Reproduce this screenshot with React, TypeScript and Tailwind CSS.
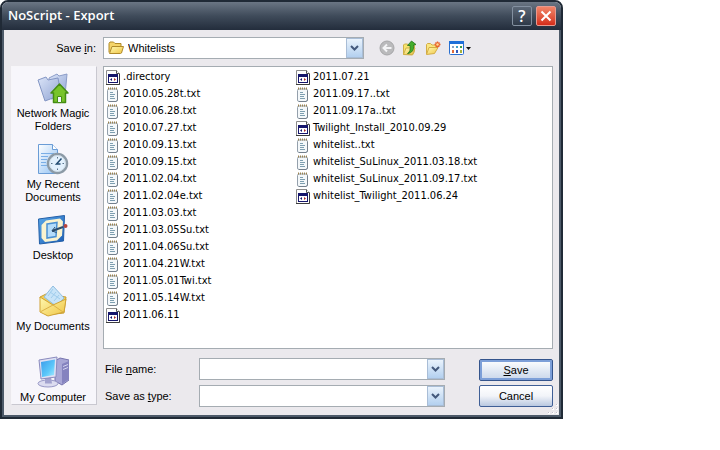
import type { ReactNode } from "react";

type FileEntry = { name: string; kind: "text" | "app" };

const files: FileEntry[] = [
  { name: ".directory", kind: "app" },
  { name: "2010.05.28t.txt", kind: "text" },
  { name: "2010.06.28.txt", kind: "text" },
  { name: "2010.07.27.txt", kind: "text" },
  { name: "2010.09.13.txt", kind: "text" },
  { name: "2010.09.15.txt", kind: "text" },
  { name: "2011.02.04.txt", kind: "text" },
  { name: "2011.02.04e.txt", kind: "text" },
  { name: "2011.03.03.txt", kind: "text" },
  { name: "2011.03.05Su.txt", kind: "text" },
  { name: "2011.04.06Su.txt", kind: "text" },
  { name: "2011.04.21W.txt", kind: "text" },
  { name: "2011.05.01Twi.txt", kind: "text" },
  { name: "2011.05.14W.txt", kind: "text" },
  { name: "2011.06.11", kind: "app" },
  { name: "2011.07.21", kind: "app" },
  { name: "2011.09.17..txt", kind: "text" },
  { name: "2011.09.17a..txt", kind: "text" },
  { name: "Twilight_Install_2010.09.29", kind: "app" },
  { name: "whitelist..txt", kind: "text" },
  { name: "whitelist_SuLinux_2011.03.18.txt", kind: "text" },
  { name: "whitelist_SuLinux_2011.09.17.txt", kind: "text" },
  { name: "whitelist_Twilight_2011.06.24", kind: "app" },
];

function Gradients() {
  return (
    <svg className="absolute h-0 w-0" aria-hidden="true">
      <defs>
        <linearGradient id="yellow" x1="0" y1="0" x2="1" y2="1">
          <stop offset="0" stopColor="#fff8b0" />
          <stop offset="1" stopColor="#efc544" />
        </linearGradient>
        <linearGradient id="periwinkle" x1="0" y1="0" x2="1" y2="1">
          <stop offset="0" stopColor="#dbe4f8" />
          <stop offset="1" stopColor="#8fa3d2" />
        </linearGradient>
        <linearGradient id="screen" x1="0" y1="0" x2="1" y2="1">
          <stop offset="0" stopColor="#3b9bea" />
          <stop offset="0.6" stopColor="#5cc8fa" />
          <stop offset="1" stopColor="#a8ecff" />
        </linearGradient>
        <linearGradient id="blue" x1="0" y1="0" x2="1" y2="1">
          <stop offset="0" stopColor="#5aa9ea" />
          <stop offset="1" stopColor="#1a5cb4" />
        </linearGradient>
        <linearGradient id="page" x1="0" y1="0" x2="1" y2="1">
          <stop offset="0" stopColor="#ffffff" />
          <stop offset="1" stopColor="#8fc0f3" />
        </linearGradient>
      </defs>
    </svg>
  );
}

function TextFileIcon() {
  return (
    <svg viewBox="0 0 16 16" className="h-4 w-4 shrink-0" aria-hidden="true">
      <rect x="2.500" y="2" width="10" height="12.500" rx="1.500" fill="#f4f8fa" stroke="#94a0ac" />
      <path d="M12.500 3.500V13l-1.500 1.500H4" fill="none" stroke="#74808c" />
      <path d="M3 1.500h10" stroke="#9b8350" strokeWidth="2" strokeDasharray="1 1" />
      <path d="M5 5.500h3M5 7.500h5M5 9.500h4M5 11.500h5" stroke="#7e9fb0" />
    </svg>
  );
}

function AppFileIcon() {
  return (
    <svg viewBox="0 0 16 16" className="h-4 w-4 shrink-0" aria-hidden="true">
      <path d="M1.500 14.500V.5h10l3 3v11z" fill="#fff" stroke="#8c8c8c" />
      <path d="M14.500 4v10.500H1" fill="none" stroke="#3c3c3c" />
      <path d="M11.500.5v3h3" fill="#fff" stroke="#555" />
      <rect x="3.500" y="4.500" width="9" height="8" fill="#fff" stroke="#16166c" />
      <path d="M3 4h10v3H3z" fill="#16166c" />
      <path d="M7 8v3L5 9.500z" fill="#16166c" />
      <path d="M9 8v3l2-1.500z" fill="#a82828" />
    </svg>
  );
}

function FolderIcon() {
  return (
    <svg viewBox="0 0 16 16" className="h-4 w-4" aria-hidden="true">
      <path d="M1 12.500V3.500l1-1.500h3.500l1.500 1.500h6v3" fill="#f5d469" stroke="#b08a2a" />
      <path d="M1.500 13.500L4 6.500h11.500l-2 6.500-1 .5z" fill="url(#yellow)" stroke="#b08a2a" />
    </svg>
  );
}

function BackIcon() {
  return (
    <svg viewBox="0 0 16 16" className="h-4 w-4" aria-hidden="true">
      <circle cx="8" cy="8" r="7" fill="#bababc" stroke="#a6a6a8" />
      <path d="M12.500 8H5M8 4.500L4.500 8 8 11.500" fill="none" stroke="#f4f4f6" strokeWidth="2" />
    </svg>
  );
}

function UpFolderIcon() {
  return (
    <svg viewBox="0 0 16 16" className="h-4 w-4" aria-hidden="true">
      <path d="M1.500 14.500V5l1-1h3l1 1.500h6v6l-2 3.500z" fill="#f7e36f" stroke="#d0b04a" />
      <path d="M1.500 14.500L4 8h9l-2.500 6.500z" fill="url(#yellow)" stroke="#d0b04a" />
      <path d="M5.500 13.500C8 12 8.500 10 8 5.500H5.500L9.500 1l4.500 3.500-2.500.7c.8 4.500-1.500 8-6 8.300z" fill="#43ad2c" stroke="#23721a" strokeWidth="0.800" />
    </svg>
  );
}

function NewFolderIcon() {
  return (
    <svg viewBox="0 0 16 16" className="h-4 w-4" aria-hidden="true">
      <path d="M1.500 14V4.500l1-1h3L7 5h4.500v3" fill="#f9e680" stroke="#d3ac45" />
      <path d="M1.500 14.500L4 7.500h9l-3.500 6z" fill="url(#yellow)" stroke="#d3ac45" />
      <path d="M12.500 1.500v6M9.500 4.500h6M10.500 2.500l4 4M14.500 2.500l-4 4" stroke="#e9632c" strokeWidth="1.400" />
      <circle cx="12.500" cy="4.500" r="1.200" fill="#ffd890" />
    </svg>
  );
}

function ViewsIcon() {
  return (
    <svg viewBox="0 0 24 16" className="h-4 w-6" aria-hidden="true">
      <rect x="1.500" y="1.500" width="14" height="13" rx="1" fill="#fff" stroke="#2a6fd0" />
      <path d="M1 1h15v3H1z" fill="#1f6fd8" />
      <path d="M4 6h2v2H4z" fill="#8ba2c4" />
      <path d="M8 6h2v2H8z" fill="#41a0c8" />
      <path d="M12 6h2v2h-2z" fill="#3e9b45" />
      <path d="M4 10h2v3H4z" fill="#e06a3c" />
      <path d="M8 10h2v3H8z" fill="#3458b8" />
      <path d="M12 10h2v3h-2z" fill="#a8b13a" />
      <path d="M18 7h5l-2.500 3z" fill="#111" />
    </svg>
  );
}

function NetworkMagicIcon() {
  return (
    <svg viewBox="0 0 32 32" className="h-8 w-8" aria-hidden="true">
      <path d="M12 6l8-4 2 2 8-2-2 22-14 3z" fill="url(#periwinkle)" stroke="#8c9dc8" />
      <path d="M1 8l8-3 2 3 10-2 3 17-16 6z" fill="url(#periwinkle)" stroke="#8496c4" />
      <path d="M22.500 12L14 21h2.500v9.500h12V21H31z" fill="#78c42a" stroke="#458c14" strokeWidth="1.500" strokeLinejoin="round" />
      <path d="M20.500 30.500v-6h4v6z" fill="#f4f8ff" stroke="#458c14" />
    </svg>
  );
}

function RecentDocumentsIcon() {
  return (
    <svg viewBox="0 0 32 32" className="h-8 w-8" aria-hidden="true">
      <path d="M1.500 1.500h14l5 5v24h-19z" fill="url(#page)" stroke="#6a9cd6" />
      <path d="M15.500 1.500v5h5" fill="#fff" stroke="#6a9cd6" />
      <path d="M4 10.500h13M4 13.500h7M4 16.500h6M4 19.500h5M4 22.500h6" stroke="#79aee6" />
      <circle cx="20.500" cy="20.500" r="9.500" fill="#e3f1fd" stroke="#8c9aa6" strokeWidth="2.500" />
      <circle cx="20.500" cy="20.500" r="8" fill="none" stroke="#cddae4" />
      <path d="M20.500 14v1.500M20.500 25.500V27M14 20.500h1.500M25.500 20.500H27" stroke="#58728a" />
      <path d="M24.500 15.500l-5 5.500h4" fill="none" stroke="#234c72" strokeWidth="1.500" />
    </svg>
  );
}

function DesktopIcon() {
  return (
    <svg viewBox="0 0 32 32" className="h-8 w-8" aria-hidden="true">
      <path d="M1.500 5l26-3.500-1 25.500-24 3z" fill="url(#blue)" stroke="#2460a8" strokeLinejoin="round" />
      <path d="M9 6.500l14-2 3 3-1 14-5 5-12 1.500L4.500 24V11z" fill="#faf3cf" />
      <path d="M10 10l10-1.500-1 14-9 1.500z" fill="#b3dcfb" stroke="#4a90d2" strokeWidth="1.500" />
      <path d="M15 17l11-4" stroke="#2b4c6c" strokeWidth="2" />
      <path d="M18 13l-3 4 4.500 1.500" fill="none" stroke="#2b4c6c" />
      <circle cx="28.500" cy="12" r="2" fill="#b8443c" />
    </svg>
  );
}

function MyDocumentsIcon() {
  return (
    <svg viewBox="0 0 32 32" className="h-8 w-8" aria-hidden="true">
      <path d="M3 12l6-3 20 3-2 16-18 2z" fill="#f1cf59" stroke="#c99d30" />
      <path d="M16 1l11 12-8 8L7 12z" fill="#c8e4f8" stroke="#8fbde0" />
      <path d="M16 4l-5 7M19 7l-5 6M22 10l-5 6M13 7l10 7" stroke="#a0cdec" />
      <path d="M3 12l13 8 13-6-2 13-16 4-8-4z" fill="url(#yellow)" stroke="#d0a336" strokeLinejoin="round" />
      <path d="M4 26.500L16 20l10 7" fill="none" stroke="#dcb148" />
    </svg>
  );
}

function MyComputerIcon() {
  return (
    <svg viewBox="0 0 32 32" className="h-8 w-8" aria-hidden="true">
      <path d="M18 5l5-3 9 2v20l-7 5-7-4z" fill="#a9a7d6" stroke="#7674ae" />
      <path d="M25 8l7-3v18l-7 5z" fill="#8583bf" />
      <path d="M26 10.500l5-2M26 13.500l5-2" stroke="#d5d4f2" />
      <ellipse cx="11" cy="27.500" rx="10" ry="3.500" fill="#dcdcf0" stroke="#9898c6" />
      <path d="M8 21h6l1 6.500H8z" fill="#a2a2ce" />
      <path d="M2 4l18-3-1 20-15 2z" fill="#dfe0f4" stroke="#8a8bbe" strokeLinejoin="round" />
      <path d="M4 6l14-2.500-1 15.500-12 2z" fill="url(#screen)" />
    </svg>
  );
}

function ResizeGrip() {
  return (
    <svg viewBox="0 0 12 12" className="h-3 w-3" aria-hidden="true">
      <path d="M9 1h2v2H9zM5 5h2v2H5zM9 5h2v2H9zM1 9h2v2H1zM5 9h2v2H5zM9 9h2v2H9z" fill="#fff" />
      <path d="M9 1h1v1H9zM5 5h1v1H5zM9 5h1v1H9zM1 9h1v1H1zM5 9h1v1H5zM9 9h1v1H9z" fill="#c4c0cc" />
    </svg>
  );
}

function DropArrow() {
  return (
    <span className="flex h-full w-full items-center justify-center border border-[#a9bdd6] bg-linear-to-b from-[#eaf3fc] to-[#b3d0ef]">
      <svg viewBox="0 0 9 6" className="h-[6px] w-[9px]" aria-hidden="true">
        <path d="M1 1l3.500 3.500L8 1" fill="none" stroke="#44597c" strokeWidth="2" />
      </svg>
    </span>
  );
}

function Place({ icon, label }: { icon: ReactNode; label: string }) {
  return (
    <li className="min-h-[71px] last:min-h-0">
      <button type="button" className="flex w-full flex-col items-center gap-[3px] pr-1 pl-[2px] text-center leading-[13px]">
        {icon}
        <span className="max-w-20">{label}</span>
      </button>
    </li>
  );
}

function TitleBar() {
  return (
    <header className="flex h-7 items-center gap-1 bg-linear-to-b from-[#6b7684] via-[#3f4b5a] to-[#232d3c] pr-[5px] pl-[6px]">
      <h1 className="flex-1 font-['Open_Sans',sans-serif] text-[13px] font-semibold text-white">NoScript - Export</h1>
      <button type="button" aria-label="Help" className="flex h-5 w-5 items-center justify-center rounded-[2px] border border-[#8390a0] bg-linear-to-b from-[#5c6877] to-[#2e3948] font-['Open_Sans',sans-serif] text-base font-semibold text-white">
        ?
      </button>
      <button type="button" aria-label="Close" className="flex h-5 w-5 items-center justify-center rounded-[2px] border border-[#e79a90] bg-linear-to-b from-[#f08468] to-[#d42a18]">
        <svg viewBox="0 0 12 12" className="h-3 w-3" aria-hidden="true">
          <path d="M1.500 1.500l9 9M10.500 1.500l-9 9" stroke="#fff" strokeWidth="2" />
        </svg>
      </button>
    </header>
  );
}

export default function App() {
  return (
    <main className="min-h-screen bg-white font-['Liberation_Sans',Arial,sans-serif] text-[11px] text-black">
      <Gradients />
      <section className="relative w-full max-w-[563px] overflow-hidden rounded-t-lg border-2 border-[#202a36] bg-[#ebe9ed]">
        <TitleBar />
        <div className="border-x-2 border-b-2 border-[#4d5a69] pt-[7px] pr-[6px] pb-2 pl-[7px]">
          <div className="flex items-center">
            <label htmlFor="folder" className="w-[85px] shrink-0 text-right">
              Save <u>i</u>n:
            </label>
            <div className="relative ml-[7px] h-[22px] w-[261px]">
              <select id="folder" className="h-full w-full appearance-none border border-[#a5acb2] bg-white pr-5 pl-6 text-[11px]">
                <option>Whitelists</option>
              </select>
              <span className="pointer-events-none absolute top-[3px] left-[5px]">
                <FolderIcon />
              </span>
              <span className="pointer-events-none absolute inset-y-px right-px w-[17px]">
                <DropArrow />
              </span>
            </div>
            <div className="ml-[15px] flex items-center gap-[7px]">
              <button type="button" aria-label="Back"><BackIcon /></button>
              <button type="button" aria-label="Up one level"><UpFolderIcon /></button>
              <button type="button" aria-label="New folder"><NewFolderIcon /></button>
              <button type="button" aria-label="Views"><ViewsIcon /></button>
            </div>
          </div>

          <div className="mt-[7px] flex items-start gap-[6px]">
            <nav className="w-[86px] shrink-0 border border-[#f7f6f9] border-r-[#c9c8d0] border-b-[#c9c8d0] bg-[#f7f6fb] pt-[5px]">
              <ul>
                <Place icon={<NetworkMagicIcon />} label="Network Magic Folders" />
                <Place icon={<RecentDocumentsIcon />} label="My Recent Documents" />
                <Place icon={<DesktopIcon />} label="Desktop" />
                <Place icon={<MyDocumentsIcon />} label="My Documents" />
                <Place icon={<MyComputerIcon />} label="My Computer" />
              </ul>
            </nav>

            <div className="min-w-0 flex-1">
              <ul className="grid h-[283px] auto-cols-[190px] grid-flow-col grid-rows-[repeat(15,17px)] overflow-hidden border border-[#a5acb2] bg-white pt-[2px] pl-px font-['DejaVu_Sans_Condensed','DejaVu_Sans',sans-serif] text-[11px]">
                {files.map((file) => (
                  <li key={file.name} className="flex items-center gap-[2px] whitespace-nowrap">
                    {file.kind === "app" ? <AppFileIcon /> : <TextFileIcon />}
                    {file.name}
                  </li>
                ))}
              </ul>

              <form className="mt-[9px] flex justify-between gap-[34px]" onSubmit={(e) => e.preventDefault()}>
                <div className="flex-1 space-y-[5px]">
                  <div className="flex items-center">
                    <label htmlFor="filename" className="w-24 pl-[2px]">
                      File <u>n</u>ame:
                    </label>
                    <div className="flex h-[22px] flex-1 border border-[#a5acb2] bg-white">
                      <input id="filename" type="text" className="min-w-0 flex-1 px-1 outline-none" />
                      <button type="button" aria-label="Recent names" className="w-[17px]">
                        <DropArrow />
                      </button>
                    </div>
                  </div>
                  <div className="flex items-center">
                    <label htmlFor="filetype" className="w-24 pl-[2px]">
                      Save as <u>t</u>ype:
                    </label>
                    <div className="relative h-[22px] flex-1">
                      <select id="filetype" className="h-full w-full appearance-none border border-[#a5acb2] bg-white px-1">
                        <option></option>
                      </select>
                      <span className="pointer-events-none absolute inset-y-px right-px w-[17px]">
                        <DropArrow />
                      </span>
                    </div>
                  </div>
                </div>
                <div className="mt-px flex w-[74px] flex-col gap-1">
                  <button type="submit" className="h-[22px] rounded-[2px] border border-[#34548c] bg-linear-to-b from-white to-[#c9d6ea] ring-2 ring-[#7d9fd8] ring-inset">
                    <u>S</u>ave
                  </button>
                  <button type="button" className="h-[22px] rounded-[2px] border border-[#3f5f96] bg-linear-to-b from-white via-[#f2f4f9] to-[#b9c8e0]">
                    Cancel
                  </button>
                </div>
              </form>
            </div>
          </div>
        </div>
        <div className="absolute right-[2px] bottom-[2px]">
          <ResizeGrip />
        </div>
      </section>
    </main>
  );
}
